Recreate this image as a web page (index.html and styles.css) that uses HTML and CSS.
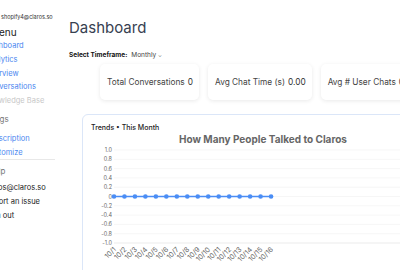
FILE: index.html
```html
<!DOCTYPE html>
<html lang="en">
<head>
  <meta charset="UTF-8">
  <meta name="viewport" content="width=device-width, initial-scale=1.0">
  <title>Dashboard</title>
  <link rel="stylesheet" href="styles.css">
</head>
<body>
  <!-- Sidebar -->
  <aside class="sidebar">
    <div class="account-email">shopify4@claros.so</div>
    <div class="menu-title">Menu</div>
    <a class="nav-link">Dashboard</a>
    <a class="nav-link">Analytics</a>
    <a class="nav-link">Overview</a>
    <a class="nav-link">Conversations</a>
    <a class="nav-link disabled">Knowledge Base</a>
    <div class="section-title settings">Settings</div>
    <a class="nav-link">Subscription</a>
    <a class="nav-link">Customize</a>
    <hr class="divider">
    <div class="section-title help">Help</div>
    <a class="nav-link plain">claros@claros.so</a>
    <a class="nav-link plain">Report an issue</a>
    <a class="nav-link plain">Sign out</a>
  </aside>

  <!-- Main content -->
  <main class="content">
    <h1>Dashboard</h1>

    <div class="timeframe">
      <span class="timeframe-label">Select Timeframe:</span>
      <span class="timeframe-value">Monthly <span class="chevron">&#8964;</span></span>
    </div>

    <div class="stats">
      <div class="stat-card">Total Conversations <span class="stat-value">0</span></div>
      <div class="stat-card">Avg Chat Time (s) <span class="stat-value">0.00</span></div>
      <div class="stat-card">Avg # User Chats <span class="stat-value">0</span></div>
    </div>

    <div class="chart-card">
      <div class="chart-heading">Trends &bull; This Month</div>
      <svg class="chart" width="350" height="140" viewBox="0 0 350 140">
        <text class="chart-title" x="174" y="10" text-anchor="middle">How Many People Talked to Claros</text>
        <g id="grid"></g>
        <g id="labels"></g>
        <g id="series"></g>
      </svg>
    </div>
  </main>

  <script>
    // Build the chart grid, axis labels and series
    const ns = 'http://www.w3.org/2000/svg';
    const gridGroup = document.getElementById('grid');
    const labelGroup = document.getElementById('labels');
    const seriesGroup = document.getElementById('series');

    const plotTop = 17, rowStep = 9.3, plotLeft = 25, plotRight = 350, colStep = 10.47;

    function el(name, attrs, parent) {
      const node = document.createElementNS(ns, name);
      for (const k in attrs) node.setAttribute(k, attrs[k]);
      parent.appendChild(node);
      return node;
    }

    for (let i = 0; i <= 10; i++) {
      const y = plotTop + i * rowStep;
      const value = 1 - i * 0.2;
      el('line', { x1: plotLeft, x2: plotRight, y1: y, y2: y, class: i === 10 ? 'axis' : 'gridline' }, gridGroup);
      const t = el('text', { x: plotLeft - 2, y: y + 2, 'text-anchor': 'end', class: 'tick' }, labelGroup);
      t.textContent = Math.abs(value) < 0.001 ? '0' : value.toFixed(1);
    }

    const zeroY = plotTop + 5 * rowStep;
    const baseY = plotTop + 10 * rowStep + 7;
    const points = [];
    for (let d = 1; d <= 16; d++) {
      const x = plotLeft + (d - 1) * colStep;
      points.push([x, zeroY]);
      const t = el('text', { x: x + 2.5, y: baseY, 'text-anchor': 'end', class: 'day-tick',
        transform: 'rotate(-45 ' + (x + 2.5) + ' ' + baseY + ')' }, labelGroup);
      t.textContent = '10/' + d;
    }
    el('polyline', { points: points.map(p => p.join(',')).join(' '), class: 'line' }, seriesGroup);
    points.forEach(([x, y]) => {
      el('circle', { cx: x, cy: y, r: 2.3, class: 'dot' }, seriesGroup);
    });
  </script>
</body>
</html>
```

FILE: styles.css
```css
body {
  margin: 0;
  display: flex;
  font-family: Inter, "Noto Sans", sans-serif;
  color: #333;
  background: #fff;
  overflow: hidden;
  width: 400px;
  height: 270px;
}
.sidebar {
  width: 71px;
  margin-left: -15px;
  flex-shrink: 0;
  padding-top: 13px;
  display: flex;
  flex-direction: column;
}
.account-email {
  font-size: 5.5px;
  line-height: 8px;
  padding-left: 16px;
  color: #333;
}
.menu-title {
  font-size: 10px;
  line-height: 14px;
  margin-top: 4px;
  padding-left: 5px;
  color: #222;
}
.nav-link {
  font-size: 7.5px;
  line-height: 13.75px;
  color: #4a86f0;
  white-space: nowrap;
}
.nav-link.disabled {
  color: #c8c8c8;
}
.nav-link.plain {
  color: #222;
}
.section-title {
  font-size: 8px;
  line-height: 14px;
  color: #777;
  white-space: nowrap;
}
.section-title.settings {
  margin: 4px 0 6px -7px;
}
.section-title.help {
  margin: 4px 0 3px;
  padding-left: 3px;
}
.divider {
  border: none;
  border-top: 1px solid #e8e8e8;
  margin: 0;
  width: 70px;
}
.content {
  padding-left: 13px;
  flex-shrink: 0;
  width: 400px;
}
h1 {
  font-size: 15px;
  font-weight: 400;
  color: #374151;
  margin: 19px 0 0;
  line-height: 18px;
}
.timeframe {
  margin-top: 14px;
  font-size: 6.5px;
  line-height: 9px;
  display: flex;
  gap: 4px;
}
.timeframe-label {
  font-weight: 700;
  color: #111;
}
.timeframe-value {
  color: #444;
}
.chevron {
  font-size: 5px;
  color: #555;
}
.stats {
  display: flex;
  gap: 9px;
  margin-top: 4px;
  padding-left: 31px;
}
.stat-card {
  flex-shrink: 0;
  height: 36px;
  padding: 0 6px 0 7px;
  display: flex;
  align-items: center;
  gap: 3px;
  background: #fff;
  border-radius: 5px;
  box-shadow: 0 1px 4px rgba(0, 0, 0, 0.09);
  font-size: 8.3px;
  color: #444;
  white-space: nowrap;
}
.stat-value {
  color: #333;
}
.chart-card {
  margin-top: 14px;
  margin-left: 13px;
  width: 362px;
  height: 170px;
  border: 1px solid #dbe6f8;
  border-radius: 6px;
  box-sizing: border-box;
  padding: 8px 0 0 6px;
}
.chart-heading {
  font-size: 7px;
  font-weight: 500;
  color: #222;
  line-height: 10px;
  padding-left: 2px;
}
.chart {
  display: block;
}
.chart-title {
  font-size: 10px;
  font-weight: 700;
  fill: #666;
}
.gridline {
  stroke: #f0f0f0;
  stroke-width: 0.6;
}
.axis {
  stroke: #e6e6e6;
  stroke-width: 0.8;
}
.tick {
  font-size: 5.5px;
  fill: #666;
}
.day-tick {
  font-size: 7px;
  fill: #666;
}
.line {
  fill: none;
  stroke: #4a8df5;
  stroke-width: 1.5;
}
.dot {
  fill: #4a8df5;
}
```
